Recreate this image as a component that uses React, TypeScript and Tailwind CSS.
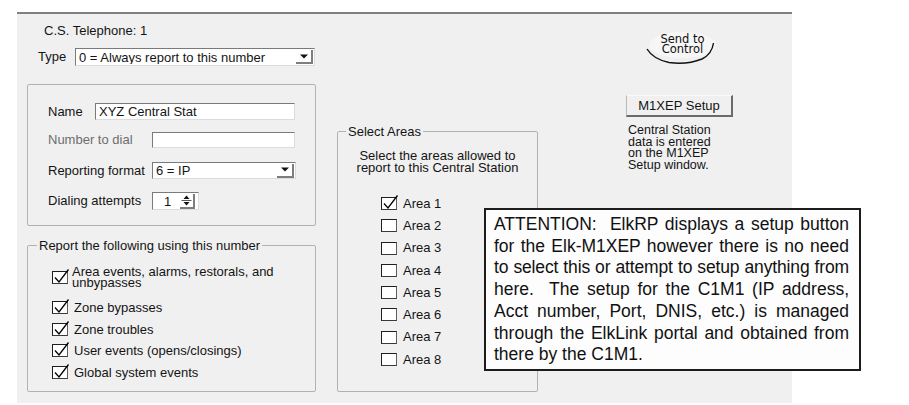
import type { ReactNode } from 'react';

// Sunken white edit box, Win32 style
function Edit({ className = '', children }: { className?: string; children?: ReactNode }) {
  return (
    <div
      className={`flex items-center border border-[#7a7a7a] border-r-[#dcdcdc] border-b-[#dcdcdc] bg-white pl-[3px] leading-none ${className}`}
    >
      {children}
    </div>
  );
}

function Combo({ value, className = '' }: { value: string; className?: string }) {
  return (
    <div
      className={`flex items-center border border-[#7a7a7a] border-r-[#dcdcdc] border-b-[#dcdcdc] bg-white leading-none ${className}`}
    >
      <span className="flex-1 truncate pl-[3px]">{value}</span>
      <span className="mr-[1px] flex h-[14px] w-[17px] items-center justify-center border-r-2 border-b-2 border-[#7d7d7d] bg-white">
        <svg width="8" height="5" viewBox="0 0 8 5">
          <path d="M0 0.5h8L4 4.5z" fill="#111" />
        </svg>
      </span>
    </div>
  );
}

function Spinner({ value }: { value: string }) {
  return (
    <div className="flex h-[18px] w-[47px] items-center border border-[#7a7a7a] border-r-[#dcdcdc] border-b-[#dcdcdc] bg-white leading-none">
      <span className="flex-1 pl-[11px]">{value}</span>
      <span className="mr-[3px] flex h-[15px] w-[15px] items-center justify-center border-r-2 border-b-2 border-[#7d7d7d]">
        <svg width="11" height="13" viewBox="0 0 11 13">
          <path d="M2.5 5h6L5.5 1.5z" fill="#111" />
          <path d="M0.5 6.5h10" stroke="#555" strokeWidth="1" />
          <path d="M2.5 8h6L5.5 11.5z" fill="#111" />
        </svg>
      </span>
    </div>
  );
}

function Check({ on = false }: { on?: boolean }) {
  return (
    <span className="relative h-[13px] w-[16px] shrink-0 border border-[#1f1f1f] border-r-[#5e5e5e] border-b-[#3a3a3a] bg-white">
      {on && (
        <svg
          className="absolute top-[-4px] left-[0px] overflow-visible"
          width="16"
          height="16"
          viewBox="0 0 16 16"
        >
          <path d="M2 9.5L6 14L15.5 1.5" fill="none" stroke="#000" strokeWidth="1.3" />
        </svg>
      )}
    </span>
  );
}

const reportItems = [
  'Zone bypasses',
  'Zone troubles',
  'User events (opens/closings)',
  'Global system events',
];

const areas = ['Area 1', 'Area 2', 'Area 3', 'Area 4', 'Area 5', 'Area 6', 'Area 7', 'Area 8'];

const notice = [
  'ATTENTION:\u00a0 ElkRP displays a setup button',
  'for the Elk-M1XEP however there is no need',
  'to select this or attempt to setup anything from',
  'here.\u00a0 The setup for the C1M1 (IP address,',
  'Acct number, Port, DNIS, etc.) is managed',
  'through the ElkLink portal and obtained from',
];

export default function App() {
  return (
    <div className="min-h-[405px] bg-white pt-[12px] pl-[17px] font-['Liberation_Sans',Arial,sans-serif] text-[13px] text-[#141414]">
      <div className="relative flex h-[391px] w-[775px] border-t-2 border-[#808080] bg-[#f0f0f0]">
        {/* left column: telephone settings */}
        <div className="flex w-[299px] shrink-0 flex-col pl-[10px]">
          <p className="mt-[9px] ml-[17px] leading-[15px]">C.S. Telephone: 1</p>

          <div className="mt-[10px] ml-[11px] flex h-[18px] items-center">
            <span className="w-[37px]">Type</span>
            <Combo value="0 = Always report to this number" className="h-[18px] w-[240px]" />
          </div>

          <div className="mt-[18px] h-[142px] rounded-[2px] border border-[#b2b2b2] pt-[18px] pl-[20px]">
            <div className="flex h-[17px] items-center">
              <span className="w-[47px]">Name</span>
              <Edit className="h-[17px] w-[200px]">XYZ Central Stat</Edit>
            </div>
            <div className="mt-[12px] flex h-[16px] items-center">
              <span className="w-[104px] text-[#6d6d6d]">Number to dial</span>
              <Edit className="h-[16px] w-[143px]" />
            </div>
            <div className="mt-[14px] flex h-[17px] items-center">
              <span className="w-[104px]">Reporting format</span>
              <Combo value="6 = IP" className="h-[17px] w-[144px]" />
            </div>
            <div className="mt-[13px] flex h-[18px] items-center">
              <span className="w-[104px]">Dialing attempts</span>
              <Spinner value="1" />
            </div>
          </div>

          <fieldset className="mt-[11.5px] h-[154.5px] rounded-[2px] border border-[#b2b2b2]">
            <legend className="ml-[9px] px-[2px] leading-[15px]">Report the following using this number</legend>
            <div className="pl-[24px]">
              <div className="mt-[13px] flex items-center">
                <Check on />
                <span className="ml-[4px] leading-[11.5px]">
                  Area events, alarms, restorals, and
                  <br />
                  unbypasses
                </span>
              </div>
              <div className="mt-[8.5px] flex flex-col">
                {reportItems.map((t) => (
                  <div key={t} className="flex h-[21.5px] items-center">
                    <Check on />
                    <span className="ml-[6px]">{t}</span>
                  </div>
                ))}
              </div>
            </div>
          </fieldset>
        </div>

        {/* middle column: area selection */}
        <fieldset className="mt-[109.5px] ml-[21px] h-[268.5px] w-[201px] shrink-0 rounded-[2px] border border-[#b2b2b2]">
          <legend className="ml-[8px] px-[2px] leading-[15px]">Select Areas</legend>
          <p className="mt-[11.5px] text-center leading-[12px]">
            Select the areas allowed to
            <br />
            report to this Central Station
          </p>
          <div className="mt-[18.5px] flex flex-col pl-[43px]">
            {areas.map((a, i) => (
              <div key={a} className="flex h-[22.25px] items-center">
                <Check on={i === 0} />
                <span className="ml-[6px]">{a}</span>
              </div>
            ))}
          </div>
        </fieldset>

        {/* right column: send / M1XEP */}
        <div className="ml-[88px] flex w-[110px] flex-col">
          <div className="relative mt-[18px] ml-[19px] h-[32px] w-[75px]">
            <div className="absolute inset-x-[4px] top-[0px] h-[26px] rounded-[50%] bg-[#f6f6f6]" />
            <p className="relative pt-[2px] text-center font-['DejaVu_Sans',sans-serif] text-[11.5px] leading-[10px] text-[#111]">
              Send to
              <br />
              Control
            </p>
            <svg className="absolute top-[4px] left-[0px]" width="75" height="30" viewBox="0 0 75 30">
              <path
                d="M2 13 Q8 23 24 26.5 Q42 29 57 23 Q67 18 68.5 7"
                fill="none"
                stroke="#111"
                strokeWidth="1.4"
              />
            </svg>
          </div>

          <button className="mt-[31px] h-[22px] w-[107px] border-t border-l border-t-[#fafafa] border-l-[#b9b9b9] border-r-2 border-b-2 border-r-[#6a6a6a] border-b-[#6a6a6a] bg-[#f0f0f0] text-center leading-none">
            M1XEP Setup
          </button>

          <p className="mt-[8px] ml-[2px] text-[12.5px] leading-[11.5px]">
            Central Station
            <br />
            data is entered
            <br />
            on the M1XEP
            <br />
            Setup window.
          </p>
        </div>

        {/* callout over the dialog */}
        <div className="absolute top-[194px] left-[467px] h-[163px] w-[377px] border-2 border-[#1c1c1c] bg-[#fdfdfd] pt-[4px] pr-[10px] pl-[8px] text-[17.5px] leading-[21.7px] text-[#111]">
          {notice.map((line, i) => (
            <div
              key={i}
              className={`text-justify [text-align-last:justify] ${i === 2 ? 'tracking-[-0.15px]' : ''}`}
            >
              {line}
            </div>
          ))}
          <div>there by the C1M1.</div>
        </div>
      </div>
    </div>
  );
}
